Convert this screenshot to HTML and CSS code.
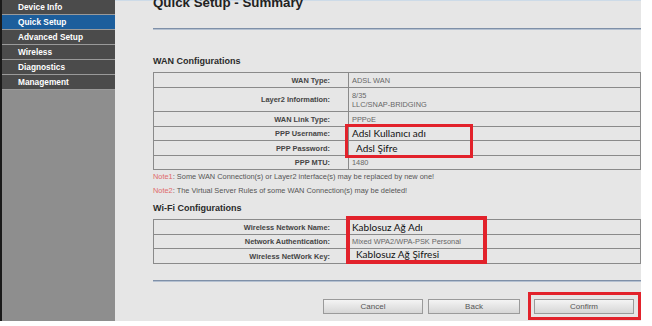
FILE: index.html
```html
<!DOCTYPE html>
<html>
<head>
    <meta charset="UTF-8">
    <title>Quick Setup - Summary</title>
    <link rel="stylesheet" href="styles.css">
</head>
<body>
    <div class="frame">
        <div class="sidebar">
            <a class="menu-item" href="#">Device Info</a>
            <a class="menu-item active" href="#">Quick Setup</a>
            <a class="menu-item" href="#">Advanced Setup</a>
            <a class="menu-item" href="#">Wireless</a>
            <a class="menu-item" href="#">Diagnostics</a>
            <a class="menu-item" href="#">Management</a>
        </div>

        <div class="main">
            <h1 class="page-title">Quick Setup - Summary</h1>
            <div class="rule"></div>

            <h2 class="section-title">WAN Configurations</h2>
            <table class="summary">
                <tr class="row-15"><td class="label">WAN Type:</td><td class="value">ADSL WAN</td></tr>
                <tr class="row-24"><td class="label">Layer2 Information:</td><td class="value">8/35<br>LLC/SNAP-BRIDGING</td></tr>
                <tr class="row-15"><td class="label">WAN Link Type:</td><td class="value">PPPoE</td></tr>
                <tr class="row-14"><td class="label">PPP Username:</td><td class="value typed">Adsl Kullanıcı adı</td></tr>
                <tr class="row-15"><td class="label">PPP Password:</td><td class="value typed indent">Adsl Şifre</td></tr>
                <tr class="row-14"><td class="label">PPP MTU:</td><td class="value">1480</td></tr>
            </table>

            <p class="note"><span class="note-tag">Note1</span>: Some WAN Connection(s) or Layer2 interface(s) may be replaced by new one!</p>
            <p class="note"><span class="note-tag">Note2</span>: The Virtual Server Rules of some WAN Connection(s) may be deleted!</p>

            <h2 class="section-title wifi">Wi-Fi Configurations</h2>
            <table class="summary">
                <tr class="row-15"><td class="label">Wireless Network Name:</td><td class="value typed">Kablosuz Ağ Adı</td></tr>
                <tr class="row-14"><td class="label">Network Authentication:</td><td class="value">Mixed WPA2/WPA-PSK Personal</td></tr>
                <tr class="row-15"><td class="label">Wireless NetWork Key:</td><td class="value typed indent top">Kablosuz Ağ Şifresi</td></tr>
            </table>

            <div class="rule bottom-rule"></div>

            <div class="buttons">
                <button type="button" class="btn btn-cancel">Cancel</button>
                <button type="button" class="btn btn-back">Back</button>
                <button type="button" class="btn btn-confirm">Confirm</button>
            </div>

            <!-- marcas rojas sobre la captura -->
            <div class="mark mark-ppp"></div>
            <div class="mark mark-wifi"></div>
            <div class="mark mark-confirm"></div>
        </div>
    </div>
</body>
</html>
```

FILE: styles.css
```css
body {
    margin: 0;
    padding: 0;
    background-color: #fff;
    font-family: 'Liberation Sans', Arial, sans-serif;
}

.frame {
    display: flex;
    width: 639px;
    height: 321px;
    overflow: hidden;
    border-left: 2px solid #1a1a1a;
}

.sidebar {
    width: 113px;
    flex-shrink: 0;
    background-color: #8e8e8e;
}

.menu-item {
    display: block;
    height: 14px;
    line-height: 14px;
    padding-left: 16px;
    background-color: #4b4b4b;
    border-bottom: 1px solid #9a9a9a;
    color: #fff;
    font-size: 8.3px;
    font-weight: bold;
    text-decoration: none;
}

.menu-item.active {
    background-color: #1c5e9c;
}

.main {
    position: relative;
    flex: 1;
    padding-left: 38px;
    background-color: #e6e6e6;
    border-top: 1px solid #cddbe8;
    box-sizing: border-box;
}

.page-title {
    margin: -6px 0 0 0;
    font-size: 13.3px;
    line-height: 16px;
    color: #222;
}

.rule {
    margin-top: 17px;
    height: 0;
    border-top: 1px solid #7f90a8;
    border-bottom: 1px solid #b4c0d0;
}

.section-title {
    margin: 26px 0 5px 0;
    font-size: 9px;
    line-height: 11px;
    color: #2a2a2a;
}

.section-title.wifi {
    margin-top: 5px;
}

.summary {
    width: 100%;
    border-collapse: collapse;
    border: 1px solid #7a7a7a;
}

.summary td {
    padding: 0;
    border: 1px solid #8a8a8a;
    font-size: 7.4px;
    line-height: 9px;
}

.row-15 td { height: 14px; }
.row-14 td { height: 13px; }
.row-24 td { height: 23px; }

.label {
    width: 176px;
    padding-right: 18px !important;
    text-align: right;
    font-weight: bold;
    color: #444;
}

.value {
    padding-left: 3px !important;
    color: #666;
}

.typed {
    font-family: Lato, 'Open Sans', sans-serif;
    font-size: 10px !important;
    line-height: 11px !important;
    color: #111;
}

.indent {
    padding-left: 7px !important;
}

.top {
    vertical-align: top;
}

.note {
    margin: 0;
    font-size: 7.4px;
    line-height: 14px;
    color: #555;
}

.note-tag {
    color: #e06a6a;
}

.bottom-rule {
    margin-top: 16px;
}

.buttons {
    display: flex;
    justify-content: flex-end;
    margin-top: 17px;
    padding-right: 7px;
}

.btn {
    height: 15px;
    padding: 0;
    border: 1px solid #9a9a9a;
    background: linear-gradient(#f4f4f4, #d6d6d6);
    color: #555;
    font-family: 'Liberation Sans', Arial, sans-serif;
    font-size: 8px;
}

.btn-cancel { width: 100px; }
.btn-back { width: 92px; margin-left: 5px; }
.btn-confirm { width: 100px; margin-left: 14px; }

.mark {
    position: absolute;
    border: 3px solid #e2222b;
    box-sizing: border-box;
}

.mark-ppp {
    left: 230px;
    top: 123px;
    width: 128px;
    height: 34px;
}

.mark-wifi {
    left: 231px;
    top: 215px;
    width: 141px;
    height: 48px;
    border-width: 4px;
}

.mark-confirm {
    left: 413px;
    top: 291px;
    width: 113px;
    height: 28px;
}
```
